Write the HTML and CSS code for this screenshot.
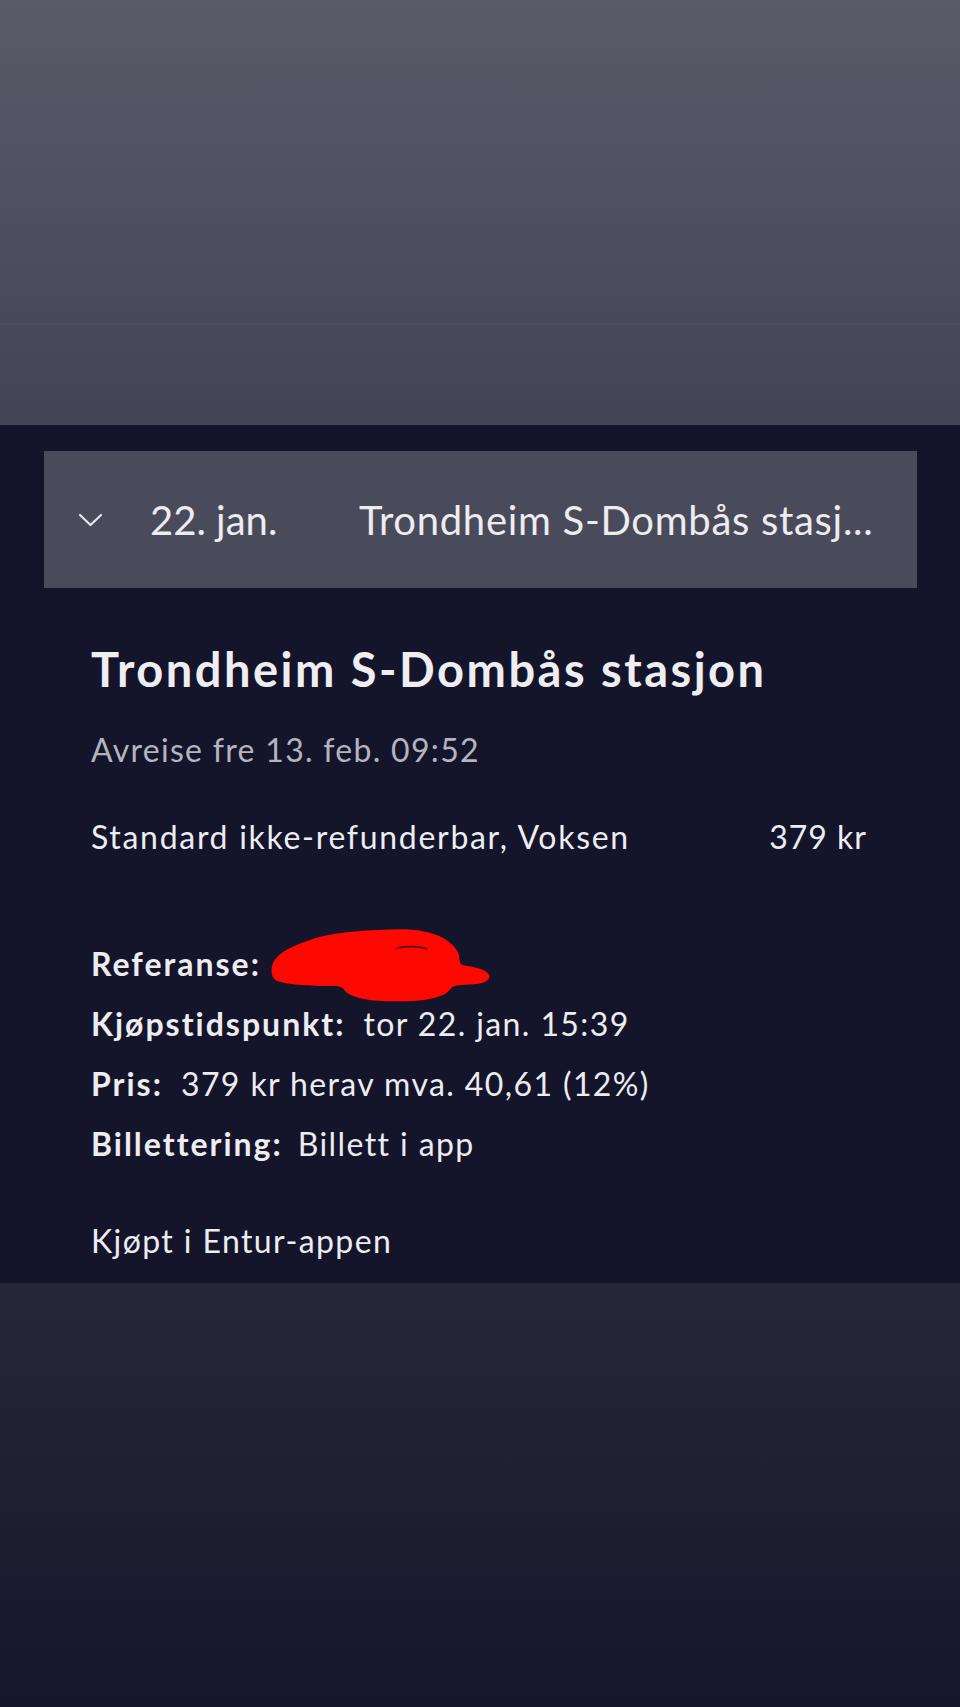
FILE: index.html
```html
<!DOCTYPE html>
<html lang="no">
<head>
<meta charset="utf-8">
<title>Billett</title>
<link rel="stylesheet" href="styles.css">
</head>
<body>
  <div class="top"></div>
  <main class="panel">
    <div class="card">
      <svg class="chevron" width="25" height="14" viewBox="0 0 25 14" aria-hidden="true">
        <path d="M2 2 L12.5 12 L23 2" fill="none" stroke="#e6e6ee" stroke-width="2.2" stroke-linecap="round" stroke-linejoin="round"/>
      </svg>
      <span class="card-date">22. jan.</span>
      <span class="card-route">Trondheim S-Dombås stasj...</span>
    </div>
    <section class="content">
      <h1 class="title">Trondheim S-Dombås stasjon</h1>
      <p class="depart">Avreise fre 13. feb. 09:52</p>
      <div class="fare">
        <span>Standard ikke-refunderbar, Voksen</span>
        <span class="price">379 kr</span>
      </div>
      <div class="details">
        <div class="row ref"><b>Referanse:</b>
          <svg class="scribble" width="240" height="90" viewBox="0 0 720 270" aria-hidden="true">
            <path d="M35 150 C40 110 90 85 160 62 C240 40 330 36 420 34 C500 34 570 55 595 105 C600 125 598 135 605 140 C640 148 680 152 688 172 C692 192 660 200 620 200 C595 200 580 202 572 212 C555 238 500 250 410 250 C330 250 270 240 252 215 C248 208 240 204 220 204 C150 204 70 200 45 185 C36 178 34 165 35 150 Z" fill="#ff0800"/>
            <path d="M410 90 C440 84 480 84 500 93" fill="none" stroke="#5a0a14" stroke-width="5" stroke-linecap="round"/>
          </svg>
        </div>
        <div class="row"><b>Kjøpstidspunkt:</b><span class="val">tor 22. jan. 15:39</span></div>
        <div class="row"><b>Pris:</b><span class="val">379 kr herav mva. 40,61 (12%)</span></div>
        <div class="row"><b>Billettering:</b><span class="val val-tight">Billett i app</span></div>
      </div>
      <p class="source">Kjøpt i Entur-appen</p>
    </section>
  </main>
  <div class="bottom"></div>
</body>
</html>
```
FILE: styles.css
```css
* { box-sizing: border-box; }
html, body { margin: 0; padding: 0; }
body {
  width: 960px;
  height: 1707px;
  overflow: hidden;
  font-family: "Lato", "Liberation Sans", sans-serif;
  color: #ececf1;
  background: #14152a;
}
.top {
  height: 425px;
  background:
    linear-gradient(to bottom, transparent 323px, rgba(255,255,255,0.025) 323px, rgba(255,255,255,0.025) 325px, transparent 325px),
    linear-gradient(to bottom, #595b69 0%, #4c4e5d 60%, #424455 100%);
}
.panel {
  height: 858px;
  background: #14152a;
  padding-top: 26px;
}
.card {
  margin: 0 43px 0 44px;
  height: 137px;
  background: #4a4b5a;
  display: flex;
  align-items: center;
  padding-left: 34px;
  font-size: 40px;
  line-height: 48px;
  color: #ececf1;
}
.chevron { flex: none; margin-right: 47px; }
.card-date { width: 209px; flex: none; }
.card-route { white-space: nowrap; letter-spacing: 0.7px; }
.content {
  padding: 0 93px 0 91px;
}
.title {
  margin: 53px 0 0;
  font-size: 47px;
  line-height: 56px;
  font-weight: 700;
  letter-spacing: 2.5px;
  color: #ededf2;
}
.depart {
  margin: 33px 0 0;
  font-size: 32px;
  line-height: 40px;
  letter-spacing: 1.3px;
  color: #b4b4c0;
}
.fare {
  margin-top: 47px;
  display: flex;
  justify-content: space-between;
  font-size: 32px;
  line-height: 40px;
  letter-spacing: 1.7px;
}
.fare .price { letter-spacing: 1px; }
.details { margin-top: 77px; }
.row {
  position: relative;
  font-size: 32px;
  line-height: 60px;
  height: 60px;
  white-space: nowrap;
  letter-spacing: 1.4px;
}
.row b { font-weight: 700; letter-spacing: 2px; }
.row .val { margin-left: 18px; }
.row .val-tight { margin-left: 15px; }
.scribble {
  position: absolute;
  left: 169px;
  top: -16px;
}
.source {
  margin: 47px 0 0;
  font-size: 32px;
  line-height: 40px;
  letter-spacing: 1.4px;
}
.bottom {
  height: 424px;
  background: linear-gradient(to bottom, #262839 0%, #1f2031 45%, #15162b 100%);
}
```
